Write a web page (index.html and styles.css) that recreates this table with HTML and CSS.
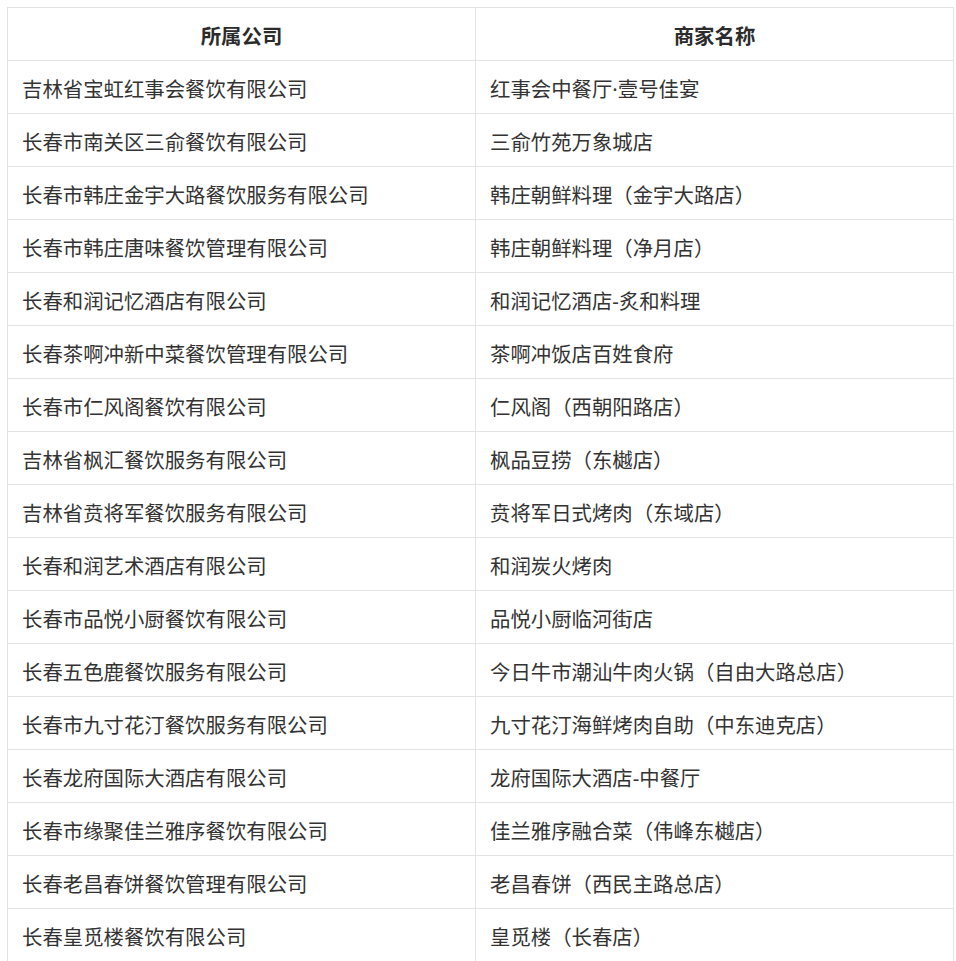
FILE: index.html
```html
<!DOCTYPE html>
<html lang="zh-CN">
<head>
<meta charset="utf-8">
<title>商家列表</title>
<link rel="stylesheet" href="styles.css">
</head>
<body>
<table class="list">
  <colgroup><col class="col-company"><col class="col-shop"></colgroup>
  <thead>
    <tr><th>所属公司</th><th>商家名称</th></tr>
  </thead>
  <tbody>
    <tr><td>吉林省宝虹红事会餐饮有限公司</td><td>红事会中餐厅·壹号佳宴</td></tr>
    <tr><td>长春市南关区三俞餐饮有限公司</td><td>三俞竹苑万象城店</td></tr>
    <tr><td>长春市韩庄金宇大路餐饮服务有限公司</td><td>韩庄朝鲜料理（金宇大路店）</td></tr>
    <tr><td>长春市韩庄唐味餐饮管理有限公司</td><td>韩庄朝鲜料理（净月店）</td></tr>
    <tr><td>长春和润记忆酒店有限公司</td><td>和润记忆酒店-炙和料理</td></tr>
    <tr><td>长春茶啊冲新中菜餐饮管理有限公司</td><td>茶啊冲饭店百姓食府</td></tr>
    <tr><td>长春市仁风阁餐饮有限公司</td><td>仁风阁（西朝阳路店）</td></tr>
    <tr><td>吉林省枫汇餐饮服务有限公司</td><td>枫品豆捞（东樾店）</td></tr>
    <tr><td>吉林省贲将军餐饮服务有限公司</td><td>贲将军日式烤肉（东域店）</td></tr>
    <tr><td>长春和润艺术酒店有限公司</td><td>和润炭火烤肉</td></tr>
    <tr><td>长春市品悦小厨餐饮有限公司</td><td>品悦小厨临河街店</td></tr>
    <tr><td>长春五色鹿餐饮服务有限公司</td><td>今日牛市潮汕牛肉火锅（自由大路总店）</td></tr>
    <tr><td>长春市九寸花汀餐饮服务有限公司</td><td>九寸花汀海鲜烤肉自助（中东迪克店）</td></tr>
    <tr><td>长春龙府国际大酒店有限公司</td><td>龙府国际大酒店-中餐厅</td></tr>
    <tr><td>长春市缘聚佳兰雅序餐饮有限公司</td><td>佳兰雅序融合菜（伟峰东樾店）</td></tr>
    <tr><td>长春老昌春饼餐饮管理有限公司</td><td>老昌春饼（西民主路总店）</td></tr>
    <tr><td>长春皇觅楼餐饮有限公司</td><td>皇觅楼（长春店）</td></tr>
  </tbody>
</table>
</body>
</html>
```
FILE: styles.css
```css
html, body {
  margin: 0;
  padding: 0;
  background: #ffffff;
}

body {
  padding: 7px 0 0 7px;
  font-family: "Noto Sans", "Noto Sans CJK SC", sans-serif;
  color: #333333;
}

.list {
  border-collapse: collapse;
  table-layout: fixed;
  width: 946px;
  font-size: 20.4px;
  line-height: 28px;
}

.col-company { width: 468px; }
.col-shop { width: 478px; }

.list th,
.list td {
  border: 1px solid #e3e3e3;
  height: 53px;
  box-sizing: border-box;
  padding: 4px 0 0 14px;
  vertical-align: middle;
  white-space: nowrap;
  text-align: left;
  font-weight: normal;
}

.list th {
  text-align: center;
  font-weight: bold;
  padding: 4px 0 0 0;
  color: #2b2b2b;
}
```
